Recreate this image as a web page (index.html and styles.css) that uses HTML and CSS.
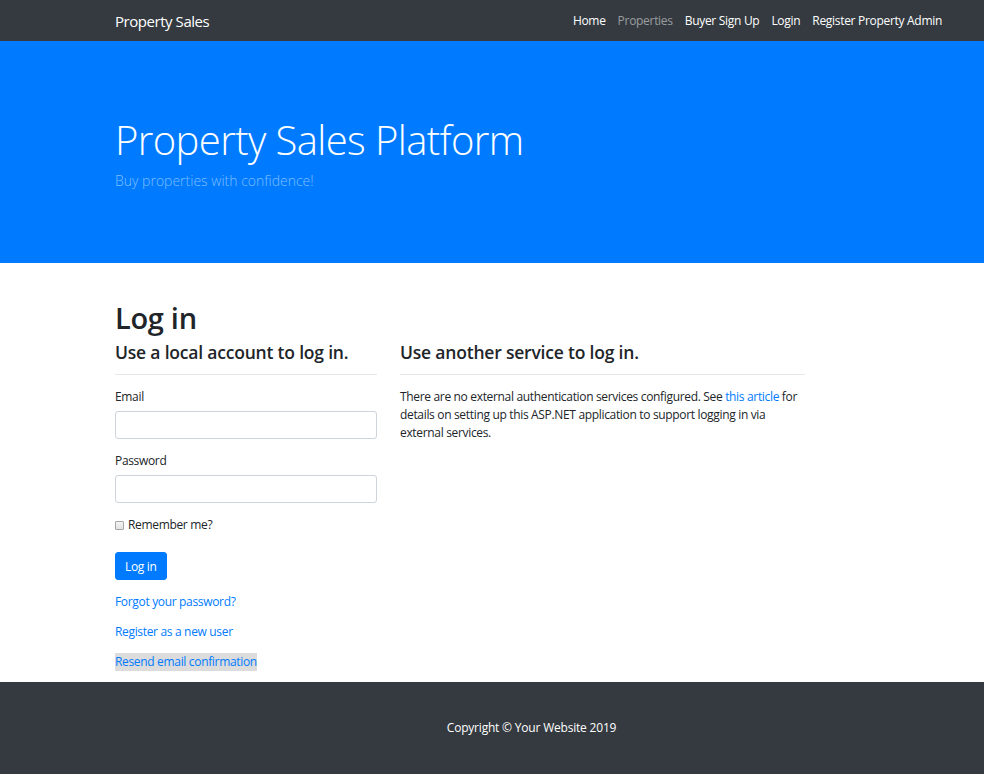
FILE: index.html
```html
<!DOCTYPE html>
<html lang="en">
<head>
<meta charset="utf-8">
<title>Log in - Property Sales</title>
<link rel="stylesheet" href="styles.css">
</head>
<body>
<header class="navbar">
  <div class="container nav-inner">
    <a class="brand" href="#">Property Sales</a>
    <nav class="nav-links">
      <a class="nav-link" href="#">Home</a>
      <a class="nav-link muted" href="#">Properties</a>
      <a class="nav-link" href="#">Buyer Sign Up</a>
      <a class="nav-link" href="#">Login</a>
      <a class="nav-link" href="#">Register Property Admin</a>
    </nav>
  </div>
</header>

<section class="hero">
  <div class="container">
    <h1 class="hero-title">Property Sales Platform</h1>
    <p class="hero-sub">Buy properties with confidence!</p>
  </div>
</section>

<main class="container main">
  <h1 class="page-title">Log in</h1>
  <div class="row">
    <section class="col-local">
      <h4 class="section-title">Use a local account to log in.</h4>
      <hr class="rule">
      <form class="login-form">
        <div class="form-group">
          <label class="label" for="email">Email</label>
          <input class="input" id="email" type="email">
        </div>
        <div class="form-group">
          <label class="label" for="password">Password</label>
          <input class="input" id="password" type="password">
        </div>
        <div class="check-group">
          <label class="check-label"><span class="checkbox"></span>Remember me?</label>
        </div>
        <div class="btn-group">
          <button class="btn" type="button">Log in</button>
        </div>
        <p class="link-line"><a class="link" href="#">Forgot your password?</a></p>
        <p class="link-line"><a class="link" href="#">Register as a new user</a></p>
        <p class="link-line"><a class="link highlighted" href="#">Resend email confirmation</a></p>
      </form>
    </section>
    <section class="col-external">
      <h4 class="section-title">Use another service to log in.</h4>
      <hr class="rule">
      <p class="text">There are no external authentication services configured. See <a class="link inline" href="#">this article</a> for details on setting up this ASP.NET application to support logging in via external services.</p>
    </section>
  </div>
</main>

<footer class="footer">
  <p class="copyright">Copyright &copy; Your Website 2019</p>
</footer>
</body>
</html>
```

FILE: styles.css
```css
* { box-sizing: border-box; }

html, body {
  margin: 0;
  padding: 0;
}

body {
  font-family: "Open Sans", "Noto Sans", sans-serif;
  font-size: 12px;
  line-height: 18px;
  color: #212529;
  background: #fff;
}

a { text-decoration: none; }

.container {
  padding: 0 36px 0 115px;
}

/* Navbar */
.navbar {
  background: #343a40;
  height: 41px;
}
.nav-inner {
  height: 41px;
  display: flex;
  align-items: center;
  justify-content: space-between;
}
.brand {
  color: #fff;
  font-size: 15px;
  letter-spacing: -0.45px;
  line-height: 20px;
}
.nav-links {
  display: flex;
  align-items: center;
}
.nav-link {
  color: #fff;
  font-size: 12px;
  letter-spacing: -0.3px;
  padding: 0 6px;
  line-height: 18px;
}
.nav-link.muted { color: rgba(255,255,255,.5); }

/* Hero */
.hero {
  background: #007bff;
  height: 222px;
  padding-top: 74px;
}
.hero-title {
  margin: 0;
  color: #fff;
  font-weight: 300;
  font-size: 40px;
  letter-spacing: -0.6px;
  line-height: 50px;
}
.hero-sub {
  margin: 5px 0 0;
  color: #7fbdff;
  font-weight: 300;
  font-size: 14px;
  letter-spacing: 0;
  line-height: 22px;
}

/* Main */
.main {
  padding-top: 37px;
  padding-bottom: 11px;
}
.page-title {
  margin: 0;
  font-size: 29px;
  font-weight: 600;
  line-height: 36px;
  letter-spacing: -0.3px;
}
.row {
  display: flex;
  gap: 23px;
  margin-top: 5px;
}
.col-local { width: 262px; }
.col-external { width: 405px; }

.section-title {
  margin: 0;
  font-size: 17.5px;
  font-weight: 600;
  line-height: 22px;
  letter-spacing: -0.2px;
}
.rule {
  margin: 11px 0 13px;
  border: 0;
  border-top: 1px solid #e5e7ea;
}

.text, .label, .check-label, .link, .btn {
  letter-spacing: -0.33px;
}

.text { margin: 3px 0 0; }

.form-group { margin-bottom: 13px; }
.form-group:first-child { margin-top: 3px; }
.label {
  display: block;
  margin-bottom: 5px;
}
.input {
  display: block;
  width: 100%;
  height: 28px;
  border: 1px solid #ced4da;
  border-radius: 3px;
  background: #fff;
  font: inherit;
}

.check-group { margin-bottom: 18px; }
.check-label {
  display: flex;
  align-items: center;
}
.checkbox {
  display: inline-block;
  width: 9px;
  height: 9px;
  border: 1px solid #a7a7a7;
  border-radius: 1px;
  background: linear-gradient(#f4f4f4, #e2e2e2);
  margin-right: 4px;
}

.btn-group { margin-bottom: 13px; }
.btn {
  background: #007bff;
  color: #fff;
  border: 1px solid #007bff;
  border-radius: 3px;
  height: 28px;
  padding: 0 9px;
  font-family: inherit;
  font-size: 12px;
}

.link-line { margin: 0 0 12px; }
.link-line:last-child { margin-bottom: 0; }
.link { color: #007bff; }
.link.highlighted { background: #dcdcdc; padding-bottom: 1px; }

/* Footer */
.footer {
  background: #343a40;
  height: 92px;
  display: flex;
  align-items: center;
  justify-content: center;
  padding-left: 79px;
}
.copyright {
  margin: 0;
  color: #fff;
  letter-spacing: -0.2px;
}
```
